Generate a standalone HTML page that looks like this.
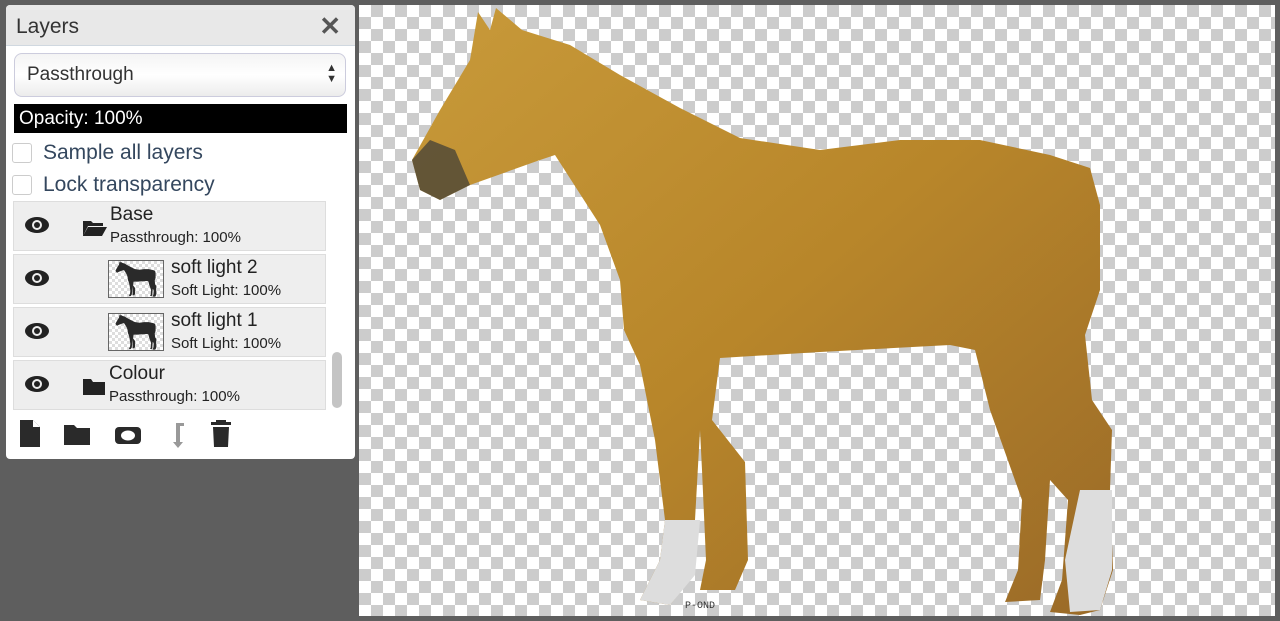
<!DOCTYPE html>
<html><head><style>
body{margin:0;width:1280px;height:621px;background:#5e5e5e;position:relative;overflow:hidden;font-family:"Liberation Sans",sans-serif}
#canvas{position:absolute;left:359px;top:5px;width:916px;height:611px;background-color:#fff;
background-image:linear-gradient(45deg,#ccc 25%,transparent 25%,transparent 75%,#ccc 75%),linear-gradient(45deg,#ccc 25%,transparent 25%,transparent 75%,#ccc 75%);
background-size:24px 24px;background-position:0 0,12px 12px}
#panel{position:absolute;left:6px;top:5px;width:349px;height:454px;background:#fff;border-radius:4px;overflow:hidden}
#hd{height:40px;background:#e8e8e8;border-bottom:1px solid #d0d8e0;position:relative}
#hd span{position:absolute;left:10px;top:10px;font-size:21px;color:#333}
#hd b{position:absolute;right:14px;top:6px;font-size:26px;color:#555}
#sel{position:absolute;left:8px;top:48px;width:330px;height:42px;border:1px solid #ccd;border-radius:8px;background:linear-gradient(#f4f4f4,#fff 50%,#ececec);font-size:19px;color:#333}
#sel span{position:absolute;left:12px;top:10px}
#sel i{position:absolute;right:8px;top:9px;font-size:11px;line-height:11px;font-style:normal;color:#333}
#op{position:absolute;left:8px;top:99px;width:333px;height:29px;background:#000;color:#fff;font-size:19px;line-height:29px;text-indent:5px}
.cb{position:absolute;left:6px;width:18px;height:18px;border:1px solid #ccc;border-radius:3px}
.cl{position:absolute;left:37px;font-size:21px;color:#34475e}
.row{position:absolute;left:7px;width:311px;height:48px;background:#eee;border:1px solid #ddd}
.row .n{position:absolute;font-size:19px;color:#222;top:2px}
.row .s{position:absolute;font-size:15px;color:#222;top:27px}
.eye{position:absolute;left:10px;top:13px}
.th{position:absolute;left:94px;top:5px;width:54px;height:36px;border:1px solid #666;background-color:#fff;background-image:linear-gradient(45deg,#ddd 25%,transparent 25%,transparent 75%,#ddd 75%),linear-gradient(45deg,#ddd 25%,transparent 25%,transparent 75%,#ddd 75%);background-size:6px 6px;background-position:0 0,3px 3px}
#sb{position:absolute;left:326px;top:347px;width:10px;height:56px;background:#c4c4c4;border-radius:5px}
</style></head><body>
<div id="canvas">
<svg width="916" height="611" viewBox="359 5 916 611" style="position:absolute;left:0;top:0">
<defs><linearGradient id="g" x1="0" y1="0" x2="1" y2="1"><stop offset="0" stop-color="#c89a3a"/><stop offset=".5" stop-color="#b8862a"/><stop offset="1" stop-color="#9a6a28"/></linearGradient></defs>
<g fill="url(#g)"><path id="hp" d="M478 12 L490 30 L496 8 L522 30 L570 45 L620 75 L680 108 L740 138 L820 150 L900 140 L980 140 L1050 155 L1090 168 L1100 205 L1100 290 L1085 335 L1092 400 L1112 430 L1110 490 L1113 570 L1100 610 L1080 615 L1050 612 L1062 580 L1068 500 L1050 480 L1045 560 L1040 600 L1005 602 L1018 570 L1022 500 L990 410 L975 350 L950 345 L820 352 L720 358 L712 420 L745 462 L748 560 L735 590 L700 590 L706 560 L702 470 L700 430 L695 520 L690 580 L670 605 L640 600 L660 560 L665 520 L655 440 L640 365 L624 330 L620 280 L600 225 L555 155 L540 160 L470 185 L440 200 L420 190 L412 160 L440 110 L470 60 Z"/></g>
<path fill="#3a3a38" opacity=".7" d="M412 160 L430 140 L455 150 L470 185 L440 200 L420 190 Z"/>
<path fill="#ddd" d="M665 520 L700 520 L695 575 L670 605 L640 600 L660 560 Z M1080 490 L1112 490 L1112 570 L1100 610 L1070 612 L1065 560 Z"/>
<text x="685" y="608" font-size="10" font-family="Liberation Mono" fill="#333">P-OND</text>
</svg>
</div>
<div id="panel">
<div id="hd"><span>Layers</span><b>✕</b></div>
<div id="sel"><span>Passthrough</span><i>▲<br>▼</i></div>
<div id="op">Opacity: 100%</div>
<div class="cb" style="top:138px"></div><div class="cl" style="top:136px">Sample all layers</div>
<div class="cb" style="top:170px"></div><div class="cl" style="top:168px">Lock transparency</div>
<div class="row" style="top:196px"><svg class="eye" width="26" height="20" viewBox="0 0 26 20"><ellipse cx="13" cy="10" rx="12" ry="8" fill="#222"/><circle cx="13" cy="10" r="5" fill="#eee"/><circle cx="13" cy="10" r="3" fill="#222"/></svg>
<svg style="position:absolute;left:68px;top:17px" width="26" height="18"><path d="M1 2h8l2 2h10v3H6L1 17z M6 8h19l-5 9H1z" fill="#222"/></svg>
<div class="n" style="left:96px">Base</div><div class="s" style="left:96px">Passthrough: 100%</div></div>
<div class="row" style="top:249px"><svg class="eye" width="26" height="20" viewBox="0 0 26 20"><ellipse cx="13" cy="10" rx="12" ry="8" fill="#222"/><circle cx="13" cy="10" r="5" fill="#eee"/><circle cx="13" cy="10" r="3" fill="#222"/></svg>
<div class="th"><svg width="54" height="36" viewBox="405 0 715 620"><use href="#hp" fill="#2a2a2a"/></svg></div><div class="n" style="left:157px">soft light 2</div><div class="s" style="left:157px">Soft Light: 100%</div></div>
<div class="row" style="top:302px"><svg class="eye" width="26" height="20" viewBox="0 0 26 20"><ellipse cx="13" cy="10" rx="12" ry="8" fill="#222"/><circle cx="13" cy="10" r="5" fill="#eee"/><circle cx="13" cy="10" r="3" fill="#222"/></svg>
<div class="th"><svg width="54" height="36" viewBox="405 0 715 620"><use href="#hp" fill="#2a2a2a"/></svg></div><div class="n" style="left:157px">soft light 1</div><div class="s" style="left:157px">Soft Light: 100%</div></div>
<div class="row" style="top:355px"><svg class="eye" width="26" height="20" viewBox="0 0 26 20"><ellipse cx="13" cy="10" rx="12" ry="8" fill="#222"/><circle cx="13" cy="10" r="5" fill="#eee"/><circle cx="13" cy="10" r="3" fill="#222"/></svg>
<svg style="position:absolute;left:68px;top:17px" width="24" height="18"><path d="M1 1h8l2 3h12v13H1z" fill="#222"/></svg>
<div class="n" style="left:95px">Colour</div><div class="s" style="left:95px">Passthrough: 100%</div></div>
<div id="sb"></div>
<svg style="position:absolute;left:14px;top:415px" width="220" height="28">
<path d="M0 0h13l7 7v20H0z" fill="#2a2a2a"/><path d="M13 0v7h7" fill="#fff"/>
<path d="M44 5h10l3 3h13v17H44z" fill="#2a2a2a"/>
<rect x="95" y="7" width="26" height="17" rx="4" fill="#2a2a2a"/><ellipse cx="108" cy="15.5" rx="7" ry="5" fill="#fff"/>
<path d="M156 3h8v3h-4v16h3l-5 6-5-6h3V3z" fill="#999"/>
<path d="M191 2h20v3h-20z M196 0h10v3h-10z M193 7h16l-1 20h-14z" fill="#2a2a2a"/>
</svg>
</div>
</body></html>
